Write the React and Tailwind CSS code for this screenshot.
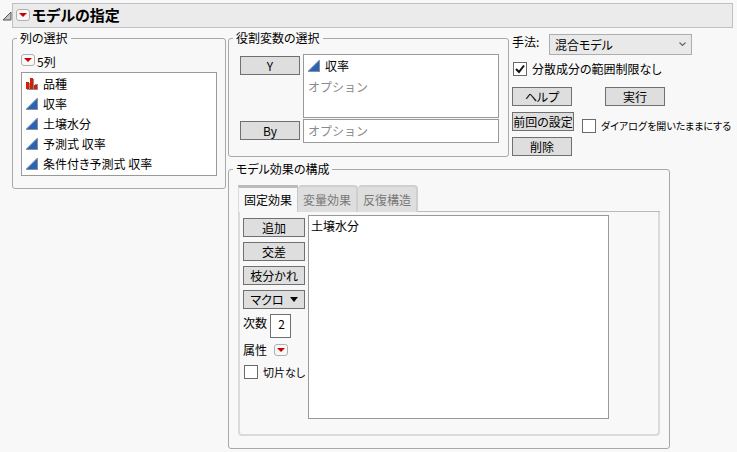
import { useState } from 'react';

const COLUMNS = [
  { name: '品種', type: 'nominal' },
  { name: '収率', type: 'continuous' },
  { name: '土壌水分', type: 'continuous' },
  { name: '予測式 収率', type: 'continuous' },
  { name: '条件付き予測式 収率', type: 'continuous' },
];

const TABS = ['固定効果', '変量効果', '反復構造'];

function ColumnIcon({ type }) {
  if (type === 'nominal') {
    return (
      <svg width="12" height="12" viewBox="0 0 12 12" className="shrink-0">
        <path d="M1 5h4V1h3v7h1V6h3v6H1z" fill="#8c8c8c" />
        <path d="M0 4h3v7H0zM4 0h3v11H4zM8 7h3v4H8z" fill="#d81e05" />
      </svg>
    );
  }
  return (
    <svg width="12" height="12" viewBox="0 0 12 12" className="shrink-0">
      <path d="M12 0v12H0v-1L11 0z" fill="#8a8f96" />
      <path d="M11 1v10H0.5z" fill="#2a63b5" />
      <path d="M0.5 11L11 0.5" stroke="#6f9fdc" strokeWidth="0.8" />
    </svg>
  );
}

function RedMenu({ label }) {
  return (
    <button aria-label={label} className="flex h-3 w-3.5 shrink-0 items-center justify-center rounded-[3px] border border-[#b0b0b0] bg-[#f8f8f8]">
      <svg width="8" height="4" viewBox="0 0 8 4">
        <path d="M0 0h8L4 4z" fill="#cc0000" />
      </svg>
    </button>
  );
}

function Button({ children, className = 'w-[60px]' }) {
  return (
    <button className={`${className} flex h-[19px] items-center justify-center whitespace-nowrap border border-[#707070] bg-[#dedede]`}>
      {children}
    </button>
  );
}

function Panel({ title, className, bodyClassName, children }) {
  return (
    <fieldset className={`${className} min-w-0 shrink-0 rounded-[3px] border border-[#a8a8a8]`}>
      <legend className="ml-1 px-[3px]">{title}</legend>
      <div className={bodyClassName}>{children}</div>
    </fieldset>
  );
}

function Check({ label, defaultChecked, className }) {
  return (
    <label className={`${className} flex items-center gap-[5px] whitespace-nowrap`}>
      <span className="relative flex h-3.5 w-3.5 shrink-0">
        <input
          type="checkbox"
          defaultChecked={defaultChecked}
          className="peer h-3.5 w-3.5 appearance-none border border-[#6a6a6a] bg-white"
        />
        <svg viewBox="0 0 14 14" className="pointer-events-none absolute inset-0 hidden peer-checked:block">
          <path d="M3 7l3 3 5-6.5" fill="none" stroke="#111" strokeWidth="2" />
        </svg>
      </span>
      {label}
    </label>
  );
}

function Placeholder() {
  return <span className="text-[#8a8a8a] [font-feature-settings:normal]">オプション</span>;
}

export default function App() {
  const [tab, setTab] = useState(TABS[0]);

  return (
    <div className="min-h-screen bg-[#f8f8f8] pt-[3px] pr-1 pl-0.5 font-['Noto_Sans_CJK_JP',sans-serif] text-xs text-black [font-feature-settings:'palt']">
      {/* Title bar */}
      <div className="flex items-center">
        <svg width="10" height="10" viewBox="0 0 10 10" className="shrink-0">
          <path d="M9 1v8H1z" fill="#c4c4c4" stroke="#555" strokeWidth="1" />
        </svg>
        <div className="flex h-[25px] flex-1 items-center gap-0.5 border border-[#c0c0c0] bg-[#ebebeb] pb-0.5 pl-[3px]">
          <RedMenu label="モデルの指定" />
          <h1 className="text-[15px] leading-5 font-bold">モデルの指定</h1>
        </div>
      </div>

      <div className="mt-0.5 flex items-start gap-0.5 pl-2.5">
        {/* Column list */}
        <Panel title="列の選択" className="w-[214px]" bodyClassName="px-2 pb-3">
          <div className="flex h-[26px] items-center gap-0.5 pt-0.5">
            <RedMenu label="列" />
            <span className="pt-1">5列</span>
          </div>
          <ul className="border border-[#999] bg-white py-px">
            {COLUMNS.map(c => (
              <li key={c.name} className="flex h-5 items-center gap-[5px] pl-1">
                <ColumnIcon type={c.type} />
                {c.name}
              </li>
            ))}
          </ul>
        </Panel>

        <div className="flex min-w-0 flex-col gap-1">
          <div className="flex items-start gap-[3px]">
            {/* Roles */}
            <Panel title="役割変数の選択" className="w-[281px]" bodyClassName="pt-2 pb-[13px] pl-[11px]">
              <div className="grid grid-cols-[60px_196px] gap-x-[3px] gap-y-px">
                <div className="pt-0.5"><Button>Y</Button></div>
                <div className="h-16 border border-[#999] bg-white pl-1">
                  <div className="flex h-[22px] items-center gap-[5px]">
                    <ColumnIcon type="continuous" />
                    収率
                  </div>
                  <div className="flex h-5 items-center"><Placeholder /></div>
                </div>
                <div className="pt-0.5"><Button>By</Button></div>
                <div className="flex h-6 items-center border border-[#999] bg-white pl-1"><Placeholder /></div>
              </div>
            </Panel>

            {/* Method and actions */}
            <div className="pt-1">
              <div className="flex items-start">
                <label htmlFor="method" className="w-[37px] whitespace-nowrap">手法:</label>
                <div className="relative">
                  <select id="method" className="h-[21px] w-[143px] appearance-none border border-[#adadad] bg-[#e9e9e9] pl-[5px]">
                    <option>混合モデル</option>
                  </select>
                  <svg width="7" height="5" viewBox="0 0 7 5" className="pointer-events-none absolute top-2 right-1.5">
                    <path d="M0.5 0.5l3 3 3-3" fill="none" stroke="#666" strokeWidth="1.2" />
                  </svg>
                </div>
              </div>
              <Check label="分散成分の範囲制限なし" defaultChecked className="mt-[5px] h-[18px] pl-px" />
              <div className="mt-[9px] grid grid-cols-[auto_1fr] gap-y-1.5">
                <Button>ヘルプ</Button>
                <div className="pl-[31px]"><Button>実行</Button></div>
                <Button className="w-[62px]">前回の設定</Button>
                <Check label="ダイアログを開いたままにする" className="h-[19px] pt-2 pl-2 text-[10px]" />
                <Button>削除</Button>
              </div>
            </div>
          </div>

          {/* Model effects */}
          <Panel title="モデル効果の構成" className="w-[442px]" bodyClassName="px-[9px] pt-2 pb-3">
            <div role="tablist" className="flex">
              {TABS.map(t => (
                <button
                  key={t}
                  role="tab"
                  aria-selected={t === tab}
                  onClick={() => setTab(t)}
                  className={`h-[27px] w-[60px] whitespace-nowrap ${
                    t === tab
                      ? 'border-t-[3px] border-r border-l border-t-[#bbb] border-r-[#c8c8c8] border-l-[#dadada] bg-[#f8f8f8]'
                      : 'rounded-t-[4px] border-t-2 border-r-2 border-[#cfcfcf] bg-[#dedede] text-[#777]'
                  }`}
                >
                  {t}
                </button>
              ))}
              <div className="flex-1 border-b border-[#bbb]" />
            </div>
            <div className="flex gap-[3px] rounded-b-[4px] border-x-2 border-b-2 border-[#dadada] pt-[3px] pb-[15px] pl-[3px]">
              <div className="w-[62px] pt-[3px]">
                <div className="flex flex-col gap-[5px]">
                  <Button className="w-full">追加</Button>
                  <Button className="w-full">交差</Button>
                  <Button className="w-full">枝分かれ</Button>
                  <Button className="w-full gap-1.5">
                    マクロ
                    <svg width="8" height="5" viewBox="0 0 8 5"><path d="M0 0h8L4 5z" /></svg>
                  </Button>
                </div>
                <div className="mt-[5px] flex h-6 items-start gap-[3px]">
                  <label htmlFor="degree" className="pt-px whitespace-nowrap">次数</label>
                  <input id="degree" defaultValue="2" className="h-6 w-[21px] border border-[#707070] bg-white pr-[5px] pb-1.5 text-right" />
                </div>
                <div className="mt-1 flex items-center gap-[7px]">
                  <span>属性</span>
                  <RedMenu label="属性" />
                </div>
                <Check label="切片なし" className="mt-1.5 h-4 pl-px text-[11px]" />
              </div>
              <div className="h-[204px] w-[301px] border border-[#999] bg-white px-0.5 pt-0.5">土壌水分</div>
            </div>
          </Panel>
        </div>
      </div>
    </div>
  );
}
